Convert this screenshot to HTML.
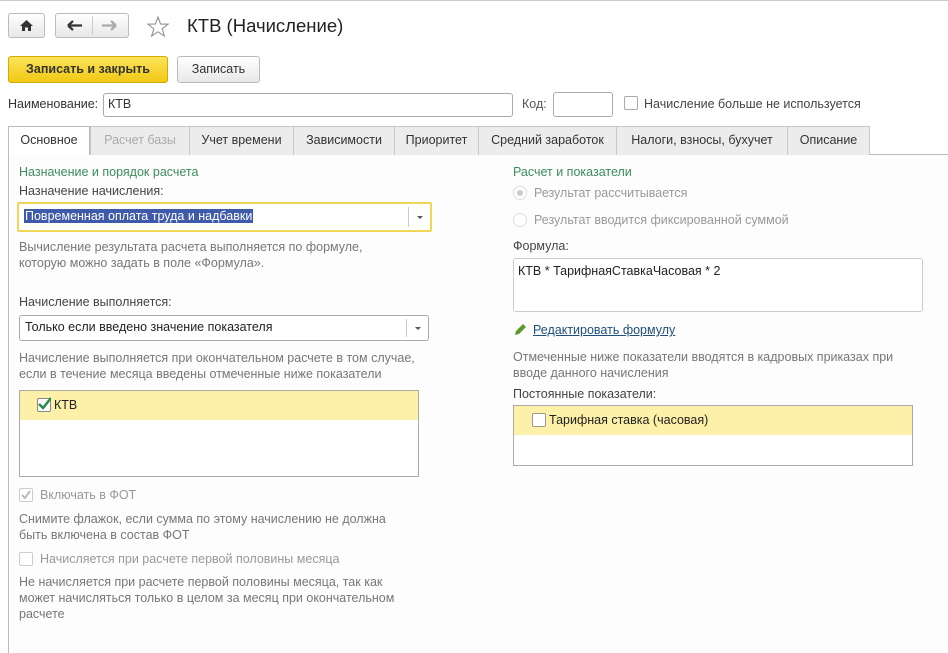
<!DOCTYPE html>
<html><head><meta charset="utf-8"><style>
*{box-sizing:border-box}
body{margin:0;width:948px;height:653px;background:#fff;font-family:"Liberation Sans",Arial,sans-serif;font-size:12.5px;color:#333;position:relative;overflow:hidden}
.a{position:absolute;white-space:nowrap}
.btn{position:absolute;border:1px solid #bbb;border-radius:3px;background:linear-gradient(#fff,#e8e8e8)}
.inp{position:absolute;border:1px solid #aaa;border-radius:3px;background:#fff}
.tab{position:absolute;top:126px;height:29px;border:1px solid #c8c8c8;border-bottom:none;background:#ececec;text-align:center;line-height:27px;color:#333}
.g{color:#777}
.green{color:#3c8c5c}
.dd{position:absolute;right:0;top:3px;bottom:3px;width:22px;border-left:1px solid #ccc}
.dd:after{content:"";position:absolute;left:8px;top:50%;margin-top:-1px;border-left:3px solid transparent;border-right:3px solid transparent;border-top:3px solid #555}
.cb{position:absolute;width:14px;height:14px;border:1px solid #aaa;border-radius:2px;background:#fff}
</style></head><body>
<div style="position:absolute;left:0;right:0;top:0;height:1px;background:#ccc"></div>
<div class="btn" style="left:8px;top:13px;width:37px;height:25px"><svg width="35" height="23" viewBox="0 0 35 23"><path d="M11 12 L17.5 6 L24 12 L22 12 L22 17 L19 17 L19 13.5 L16 13.5 L16 17 L13 17 L13 12 Z" fill="#333"/></svg></div>
<div class="btn" style="left:55px;top:13px;width:74px;height:25px"><div style="position:absolute;left:36px;top:2px;bottom:2px;width:1px;background:#ccc"></div>
<svg width="72" height="23" viewBox="0 0 72 23"><path d="M12 11.5 H26 M12 11.5 L17 7 M12 11.5 L17 16" stroke="#333" stroke-width="2.2" fill="none"/><path d="M46 11.5 H60 M60 11.5 L55 7 M60 11.5 L55 16" stroke="#aaa" stroke-width="2.2" fill="none"/></svg></div>
<svg class="a" style="left:146px;top:15px" width="24" height="24" viewBox="0 0 24 24"><path d="M12 2 L14.6 9 L22 9.2 L16.2 13.8 L18.3 21 L12 16.8 L5.7 21 L7.8 13.8 L2 9.2 L9.4 9 Z" fill="none" stroke="#999" stroke-width="1.2"/></svg>
<div class="a" style="left:187px;top:15px;font-size:18.5px;color:#222">КТВ (Начисление)</div>
<div class="btn" style="left:8px;top:56px;width:160px;height:27px;background:linear-gradient(#fbe35a,#f1c814);border-color:#d4ac00;text-align:center;line-height:25px;font-weight:bold;color:#333">Записать и закрыть</div>
<div class="btn" style="left:177px;top:56px;width:83px;height:27px;text-align:center;line-height:25px;color:#333">Записать</div>
<div class="a" style="left:8px;top:97px">Наименование:</div>
<div class="inp" style="left:103px;top:93px;width:410px;height:24px;padding:3px 4px">КТВ</div>
<div class="a" style="left:522px;top:97px;color:#555">Код:</div>
<div class="inp" style="left:553px;top:92px;width:60px;height:25px"></div>
<div class="cb" style="left:624px;top:96px"></div>
<div class="a" style="left:644px;top:97px;color:#444">Начисление больше не используется</div>
<div style="position:absolute;left:89px;right:0;top:154px;height:1px;background:#bbb"></div>
<div style="position:absolute;left:8px;top:154px;width:1px;height:499px;background:#bbb"></div>
<div style="position:absolute;left:9px;top:155px;right:0;bottom:0;background:#fdfdfd"></div>
<div class="tab" style="left:8px;width:82px;background:#fff;height:29px;border-color:#bbb">Основное</div>
<div class="tab" style="left:90px;width:100px;color:#aaa">Расчет базы</div>
<div class="tab" style="left:189px;width:105px">Учет времени</div>
<div class="tab" style="left:293px;width:102px">Зависимости</div>
<div class="tab" style="left:394px;width:85px">Приоритет</div>
<div class="tab" style="left:478px;width:139px">Средний заработок</div>
<div class="tab" style="left:616px;width:172px">Налоги, взносы, бухучет</div>
<div class="tab" style="left:787px;width:83px">Описание</div>

<div class="a green" style="left:19px;top:165px">Назначение и порядок расчета</div>
<div class="a" style="left:19px;top:184px;color:#444">Назначение начисления:</div>
<div class="inp" style="left:17px;top:202px;width:415px;height:30px;border:2px solid #f1d655;border-radius:2px"><span class="a" style="left:5px;top:5px;background:#3f5aa8;color:#fff;padding:0 1px">Повременная оплата труда и надбавки</span><div class="dd"></div></div>
<div class="a g" style="left:19px;top:239px;line-height:16px">Вычисление результата расчета выполняется по формуле,<br>которую можно задать в поле «Формула».</div>
<div class="a" style="left:19px;top:295px;color:#444">Начисление выполняется:</div>
<div class="inp" style="left:19px;top:315px;width:410px;height:26px;padding:4px 5px;color:#222">Только если введено значение показателя<div class="dd"></div></div>
<div class="a g" style="left:19px;top:350px;line-height:16px">Начисление выполняется при окончательном расчете в том случае,<br>если в течение месяца введены отмеченные ниже показатели</div>
<div style="position:absolute;left:19px;top:390px;width:400px;height:87px;border:1px solid #aaa;background:#fff"><div style="height:29px;background:#fdf0a8"></div>
<div class="cb" style="left:17px;top:7px;border-color:#888"><svg width="14" height="14" style="position:absolute;left:-1px;top:-2px"><path d="M2 7 L6 11 L14 1" stroke="#2a8a4a" stroke-width="2.5" fill="none"/></svg></div>
<div class="a" style="left:34px;top:7px;color:#222">КТВ</div></div>
<div class="cb" style="left:19px;top:488px;border-color:#ccc"><svg width="14" height="14" style="position:absolute;left:-1px;top:-1px"><path d="M3 7 L6 10 L11 3" stroke="#bbb" stroke-width="2" fill="none"/></svg></div>
<div class="a" style="left:40px;top:488px;color:#999">Включать в ФОТ</div>
<div class="a g" style="left:19px;top:511px;line-height:16px">Снимите флажок, если сумма по этому начислению не должна<br>быть включена в состав ФОТ</div>
<div class="cb" style="left:19px;top:552px;border-color:#ccc"></div>
<div class="a" style="left:40px;top:552px;color:#999">Начисляется при расчете первой половины месяца</div>
<div class="a g" style="left:19px;top:574px;line-height:16px">Не начисляется при расчете первой половины месяца, так как<br>может начисляться только в целом за месяц при окончательном<br>расчете</div>

<div class="a green" style="left:513px;top:165px">Расчет и показатели</div>
<div style="position:absolute;left:513px;top:186px;width:14px;height:14px;border:1px solid #ddd;border-radius:50%;background:#fff"><div style="position:absolute;left:3px;top:3px;width:6px;height:6px;border-radius:50%;background:#ccc"></div></div>
<div class="a" style="left:534px;top:186px;color:#999">Результат рассчитывается</div>
<div style="position:absolute;left:513px;top:213px;width:14px;height:14px;border:1px solid #ddd;border-radius:50%;background:#fff"></div>
<div class="a" style="left:534px;top:213px;color:#999">Результат вводится фиксированной суммой</div>
<div class="a" style="left:513px;top:239px;color:#444">Формула:</div>
<div class="inp" style="left:513px;top:258px;width:410px;height:54px;padding:5px 4px;color:#222;border-color:#ccc">КТВ * ТарифнаяСтавкаЧасовая * 2</div>
<svg class="a" style="left:514px;top:323px" width="13" height="13" viewBox="0 0 13 13"><path d="M1 12 L2 8 L9 1 L12 4 L5 11 Z" fill="#5a9a2a"/></svg>
<div class="a" style="left:533px;top:323px;color:#1f4f7a;text-decoration:underline">Редактировать формулу</div>
<div class="a g" style="left:513px;top:349px;line-height:16px">Отмеченные ниже показатели вводятся в кадровых приказах при<br>вводе данного начисления</div>
<div class="a" style="left:513px;top:387px;color:#444">Постоянные показатели:</div>
<div style="position:absolute;left:513px;top:405px;width:400px;height:61px;border:1px solid #aaa;background:#fff"><div style="height:29px;background:#fdf0a8"></div>
<div class="cb" style="left:18px;top:7px;border-color:#999"></div>
<div class="a" style="left:35px;top:7px;color:#222">Тарифная ставка (часовая)</div></div>
</body></html>
